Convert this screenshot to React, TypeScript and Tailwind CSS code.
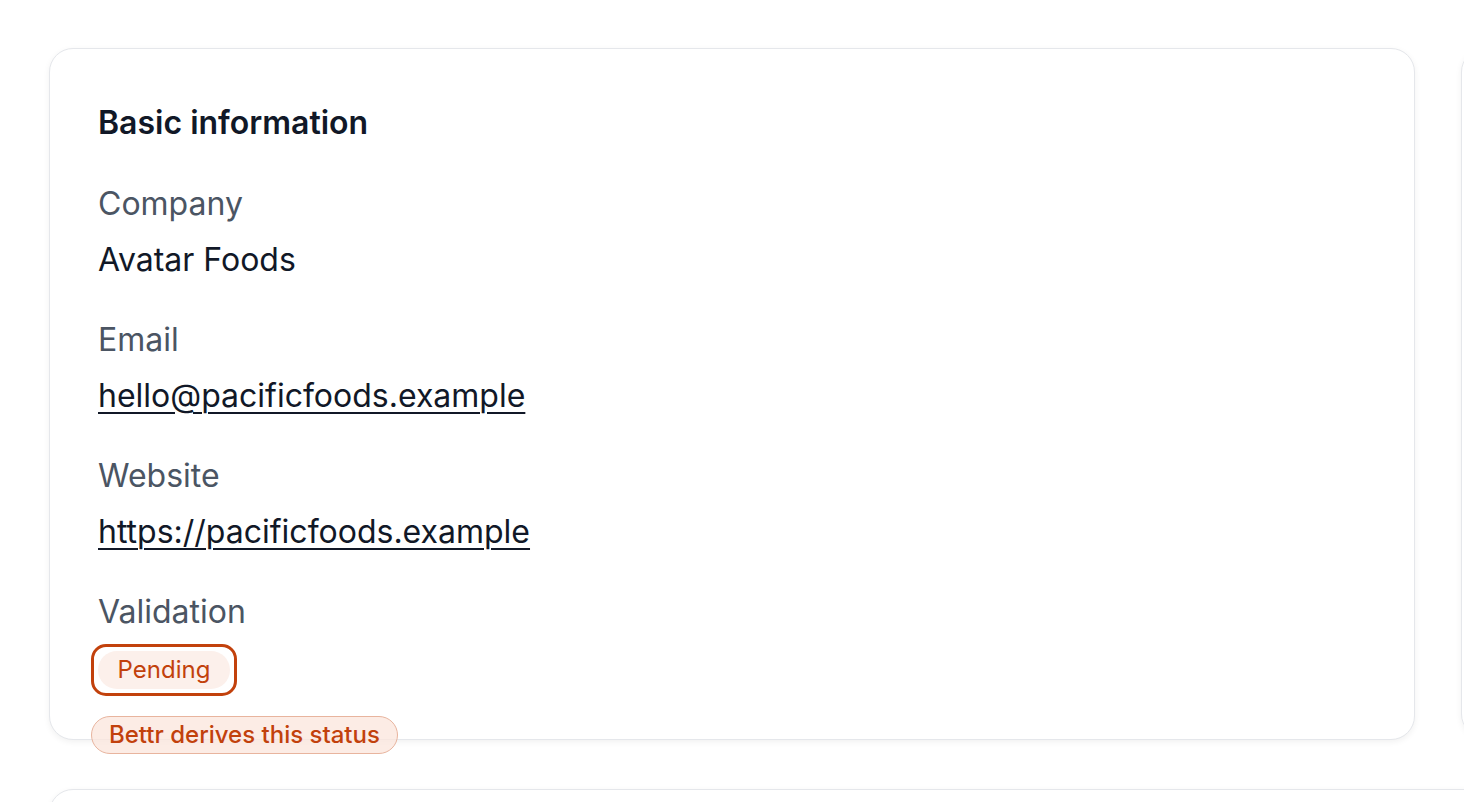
const Field = ({ label, children }: { label: string; children: React.ReactNode }) => {
    return (
        <div className="flex flex-col gap-[8px]">
            <div className="text-[32px] leading-[48px] text-[#4b5563]">{label}</div>
            <div className="text-[32px] leading-[48px] text-[#111827]">{children}</div>
        </div>
    )
}

const App = () => {
    return (
        <div
            className="h-screen w-full overflow-hidden bg-white"
            style={{ fontFamily: "Inter, 'Noto Sans', sans-serif" }}
        >
            <div className="flex flex-col gap-[49px] pt-[48px] pl-[49px]">
                <div className="flex gap-[46px]">
                    {/* Basic information card */}
                    <section className="relative w-[1366px] shrink-0 rounded-[24px] border border-[#e5e7eb] bg-white px-[48px] pt-[50px] pb-[50px] shadow-[0_2px_6px_rgba(0,0,0,0.06)]">
                        <h2 className="text-[32px] font-semibold leading-[48px] text-[#111827]">Basic information</h2>

                        <div className="mt-[33px] flex flex-col gap-[32px]">
                            <Field label="Company">Avatar Foods</Field>
                            <Field label="Email">
                                <a href="#" className="underline underline-offset-[5px] decoration-[2px]">hello@pacificfoods.example</a>
                            </Field>
                            <Field label="Website">
                                <a href="#" className="underline underline-offset-[5px] decoration-[2px]">https://pacificfoods.example</a>
                            </Field>
                            <div className="flex flex-col gap-[15px]">
                                <div className="text-[32px] leading-[48px] text-[#4b5563]">Validation</div>
                                <div className="relative">
                                    <button className="flex rounded-[8px] outline-[3px] outline-offset-[4px] outline-[#c2410c]">
                                        <span className="inline-flex h-[38px] w-[132px] items-center justify-center rounded-full bg-[#fcf0eb] text-[24px] text-[#c2410c]">
                                            Pending
                                        </span>
                                    </button>
                                    {/* tooltip */}
                                    <div className="absolute left-[-7px] top-[65px] z-10 flex h-[38px] items-center whitespace-nowrap rounded-full border-[1.5px] border-[#e8b49e] bg-[#fbe6dc]/75 px-[17px] text-[24px] font-medium text-[#c2410c]">
                                        Bettr derives this status
                                    </div>
                                </div>
                            </div>
                        </div>
                    </section>

                    {/* next card, cut off */}
                    <section className="h-[690px] w-[600px] shrink-0 rounded-[24px] border border-[#e5e7eb] bg-white shadow-[0_2px_6px_rgba(0,0,0,0.06)]" />
                </div>

                <section className="h-[300px] w-[2000px] shrink-0 rounded-[24px] border border-[#e5e7eb] bg-white shadow-[0_2px_6px_rgba(0,0,0,0.06)]" />
            </div>
        </div>
    )
}

export default App;
